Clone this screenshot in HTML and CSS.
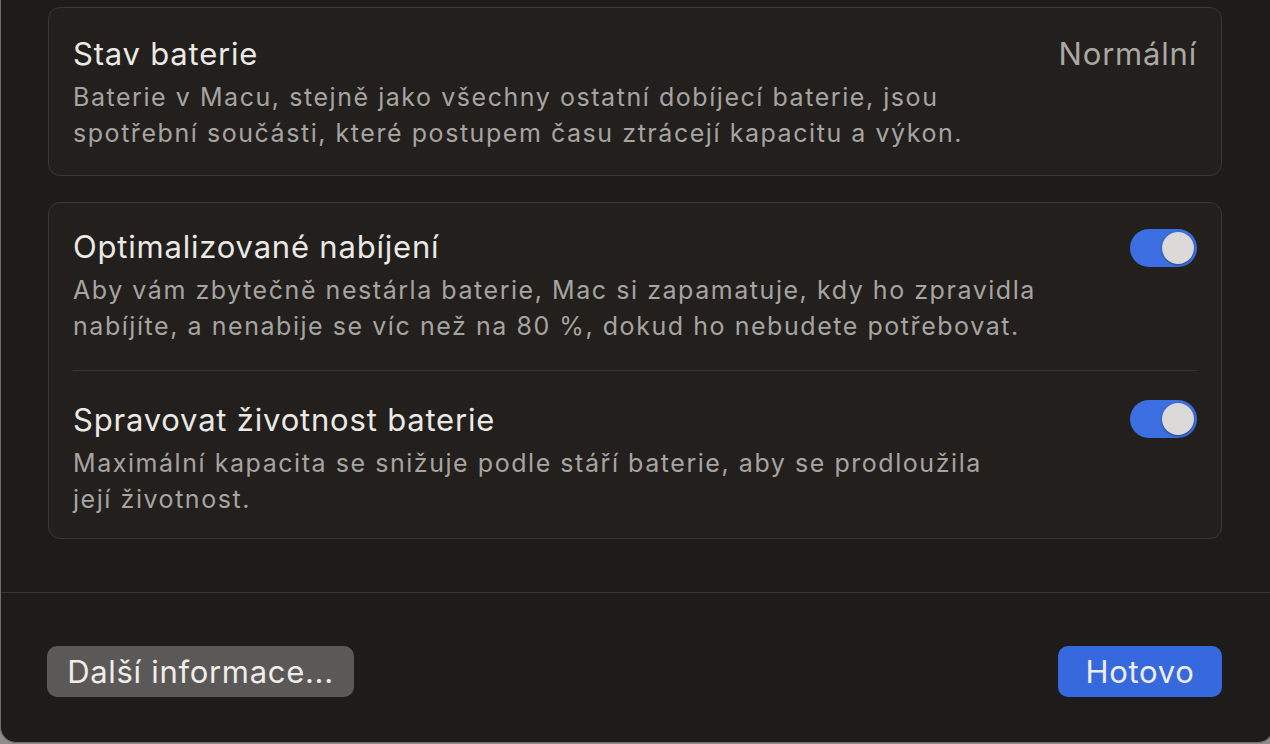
FILE: index.html
```html
<!DOCTYPE html>
<html lang="cs">

<head>
    <meta charset="UTF-8">
    <title>Stav baterie</title>
    <link rel="stylesheet" href="styles.css">
</head>

<body>
    <div class="window">
        <div class="content">
            <div class="card">
                <div class="row row-first">
                    <div class="text">
                        <h2 class="title">Stav baterie</h2>
                        <p class="desc">Baterie v Macu, stejně jako všechny ostatní dobíjecí baterie, jsou<br>spotřební součásti, které postupem času ztrácejí kapacitu a výkon.</p>
                    </div>
                    <span class="value">Normální</span>
                </div>
            </div>

            <div class="card">
                <div class="row row-top">
                    <div class="text">
                        <h2 class="title">Optimalizované nabíjení</h2>
                        <p class="desc">Aby vám zbytečně nestárla baterie, Mac si zapamatuje, kdy ho zpravidla<br>nabíjíte, a nenabije se víc než na 80 %, dokud ho nebudete potřebovat.</p>
                    </div>
                    <span class="toggle on"><span class="knob"></span></span>
                </div>
                <div class="divider"></div>
                <div class="row row-bottom">
                    <div class="text">
                        <h2 class="title">Spravovat životnost baterie</h2>
                        <p class="desc">Maximální kapacita se snižuje podle stáří baterie, aby se prodloužila<br>její životnost.</p>
                    </div>
                    <span class="toggle on toggle-low"><span class="knob"></span></span>
                </div>
            </div>
        </div>

        <div class="footer">
            <button class="btn btn-gray">Další informace...</button>
            <button class="btn btn-blue">Hotovo</button>
        </div>
    </div>
</body>
</html>
```

FILE: styles.css
```css
* {
    margin: 0;
    padding: 0;
    box-sizing: border-box;
}

html,
body {
    height: 100%;
    overflow: hidden;
}

body {
    background: #8e8c8a;
    font-family: Inter, "Noto Sans", "Liberation Sans", sans-serif;
}

.window {
    width: 1274px;
    height: 743px;
    background: #1e1c1a;
    border: 1px solid #6f6d6b;
    border-top: none;
    border-radius: 0 0 16px 16px;
    display: flex;
    flex-direction: column;
}

.content {
    padding: 7px 51px 0 47px;
    display: flex;
    flex-direction: column;
    gap: 26px;
    height: 593px;
    border-bottom: 1px solid #383634;
}

.card {
    background: #221f1d;
    border: 1px solid #3a3836;
    border-radius: 12px;
    padding: 0 24px;
}

.row {
    display: flex;
    justify-content: space-between;
    align-items: flex-start;
}

.row-first {
    padding: 28px 0 24px;
}

.row-top {
    padding: 26px 0 26px;
}

.row-bottom {
    padding: 31px 0 21px;
}

.divider {
    height: 1px;
    background: #353331;
}

.title {
    font-size: 31px;
    line-height: 36px;
    font-weight: 400;
    letter-spacing: 0.8px;
    color: #ebe9e6;
    margin-bottom: 7px;
}

.desc {
    font-size: 25px;
    line-height: 36px;
    letter-spacing: 1.55px;
    color: #a6a4a1;
}

.value {
    font-size: 31px;
    line-height: 36px;
    letter-spacing: 0.8px;
    color: #aaa8a5;
}

.toggle {
    width: 67px;
    height: 38px;
    border-radius: 19px;
    background: #3b6ee0;
    display: flex;
    align-items: center;
    justify-content: flex-end;
    padding: 3px;
    flex-shrink: 0;
}

.toggle-low {
    margin-top: -2px;
}

.knob {
    width: 32px;
    height: 32px;
    border-radius: 50%;
    background: #dbdad9;
    box-shadow: 0 1px 2px rgba(0, 0, 0, 0.4);
}

.footer {
    flex: 1;
    display: flex;
    justify-content: space-between;
    align-items: flex-start;
    padding: 53px 51px 0 46px;
}

.btn {
    height: 51px;
    border: none;
    border-radius: 10px;
    font-family: Inter, "Noto Sans", "Liberation Sans", sans-serif;
    font-size: 31px;
    letter-spacing: 0.7px;
    color: #efedea;
}

.btn-gray {
    width: 307px;
    background: #5b5957;
}

.btn-blue {
    width: 164px;
    background: #3669de;
}
```
